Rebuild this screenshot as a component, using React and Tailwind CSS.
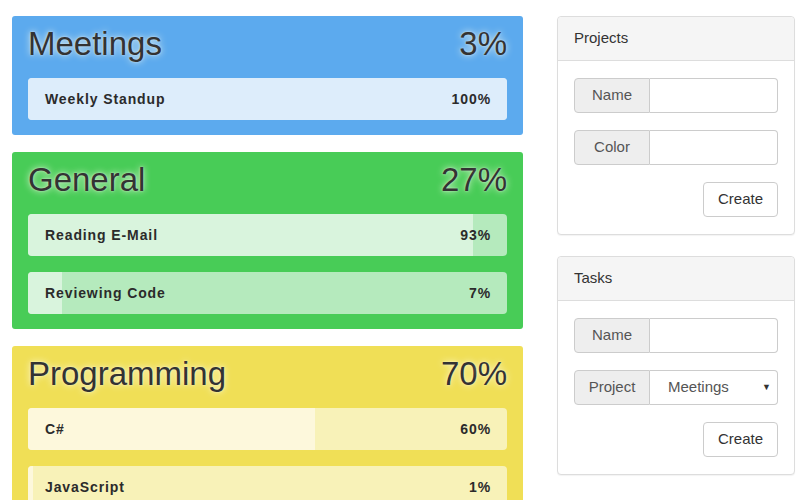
const projects = [
  {
    name: "Meetings",
    percent: 3,
    card: "bg-[#5caaee]",
    bar: "bg-[#bddcf8]",
    fill: "bg-[#ddedfb]",
    tasks: [{ name: "Weekly Standup", percent: 100 }],
  },
  {
    name: "General",
    percent: 27,
    card: "bg-[#48cc57]",
    bar: "bg-[#b5eabd]",
    fill: "bg-[#d9f4dd]",
    tasks: [
      { name: "Reading E-Mail", percent: 93 },
      { name: "Reviewing Code", percent: 7 },
    ],
  },
  {
    name: "Programming",
    percent: 70,
    card: "bg-[#f0df56]",
    bar: "bg-[#f8f2b8]",
    fill: "bg-[#fdf8dc]",
    tasks: [
      { name: "C#", percent: 60 },
      { name: "JavaScript", percent: 1 },
      { name: "CSS", percent: 39 },
    ],
  },
];

const glow = { textShadow: "0 0 7px rgba(255,255,240,0.9), 0 0 2px rgba(255,255,255,0.6)" };

function ProjectCard({ project }) {
  return (
    <section className={`rounded-[3px] px-4 pt-[10px] pb-[15px] ${project.card}`}>
      <div className="mb-4 flex h-9 items-center justify-between text-[33px] leading-9 text-[#333]" style={glow}>
        <span>{project.name}</span>
        <span>{project.percent}%</span>
      </div>
      <div className="flex flex-col gap-4">
        {project.tasks.map((task) => (
          <div key={task.name} className={`relative h-[42px] overflow-hidden rounded-[4px] ${project.bar}`}>
            <div className={`absolute inset-y-0 left-0 ${project.fill}`} style={{ width: `${task.percent}%` }} />
            <div className="relative flex h-full items-center justify-between pl-[17px] pr-4 text-sm font-bold tracking-[0.9px] text-[#2b2b2b]">
              <span>{task.name}</span>
              <span>{task.percent}%</span>
            </div>
          </div>
        ))}
      </div>
    </section>
  );
}

function Field({ label, children }) {
  return (
    <div className="flex h-[35px] text-[15px]">
      <span className="flex w-[76px] items-center justify-center rounded-l-[4px] border border-[#ccc] bg-[#eee] text-[#555]">
        {label}
      </span>
      {children}
    </div>
  );
}

function Panel({ title, children }) {
  return (
    <div className="rounded-[4px] border border-[#ddd] bg-white shadow-[0_1px_1px_rgba(0,0,0,0.05)]">
      <div className="flex h-[44px] items-center rounded-t-[4px] border-b border-[#ddd] bg-[#f5f5f5] px-4 text-[15px] text-[#333]">
        {title}
      </div>
      <div className="flex flex-col gap-[17px] px-4 pt-[17px] pb-[17px]">
        {children}
        <div className="flex justify-end">
          <button className="h-[35px] w-[75px] rounded-[4px] border border-[#ccc] bg-white text-[15px] text-[#333]">Create</button>
        </div>
      </div>
    </div>
  );
}

export default function App() {
  return (
    <div className="flex h-[500px] gap-[34px] overflow-hidden bg-white pl-3 pt-4 font-['Liberation_Sans',Arial,sans-serif]">
      <div className="flex w-[511px] shrink-0 flex-col gap-[17px]">
        {projects.map((project) => (
          <ProjectCard key={project.name} project={project} />
        ))}
      </div>

      <div className="flex w-[238px] shrink-0 flex-col gap-[21px]">
        <Panel title="Projects">
          <Field label="Name">
            <input className="min-w-0 flex-1 rounded-r-[4px] border border-l-0 border-[#ccc] px-3 outline-none" />
          </Field>
          <Field label="Color">
            <input className="min-w-0 flex-1 rounded-r-[4px] border border-l-0 border-[#ccc] px-3 outline-none" />
          </Field>
        </Panel>

        <Panel title="Tasks">
          <Field label="Name">
            <input className="min-w-0 flex-1 rounded-r-[4px] border border-l-0 border-[#ccc] px-3 outline-none" />
          </Field>
          <Field label="Project">
            <div className="flex min-w-0 flex-1 items-center justify-between rounded-r-[4px] border border-l-0 border-[#ccc] pl-[18px] pr-[6px] text-[#555]">
              <span>Meetings</span>
              <span className="text-[9px] text-[#333]">▼</span>
            </div>
          </Field>
        </Panel>
      </div>
    </div>
  );
}
